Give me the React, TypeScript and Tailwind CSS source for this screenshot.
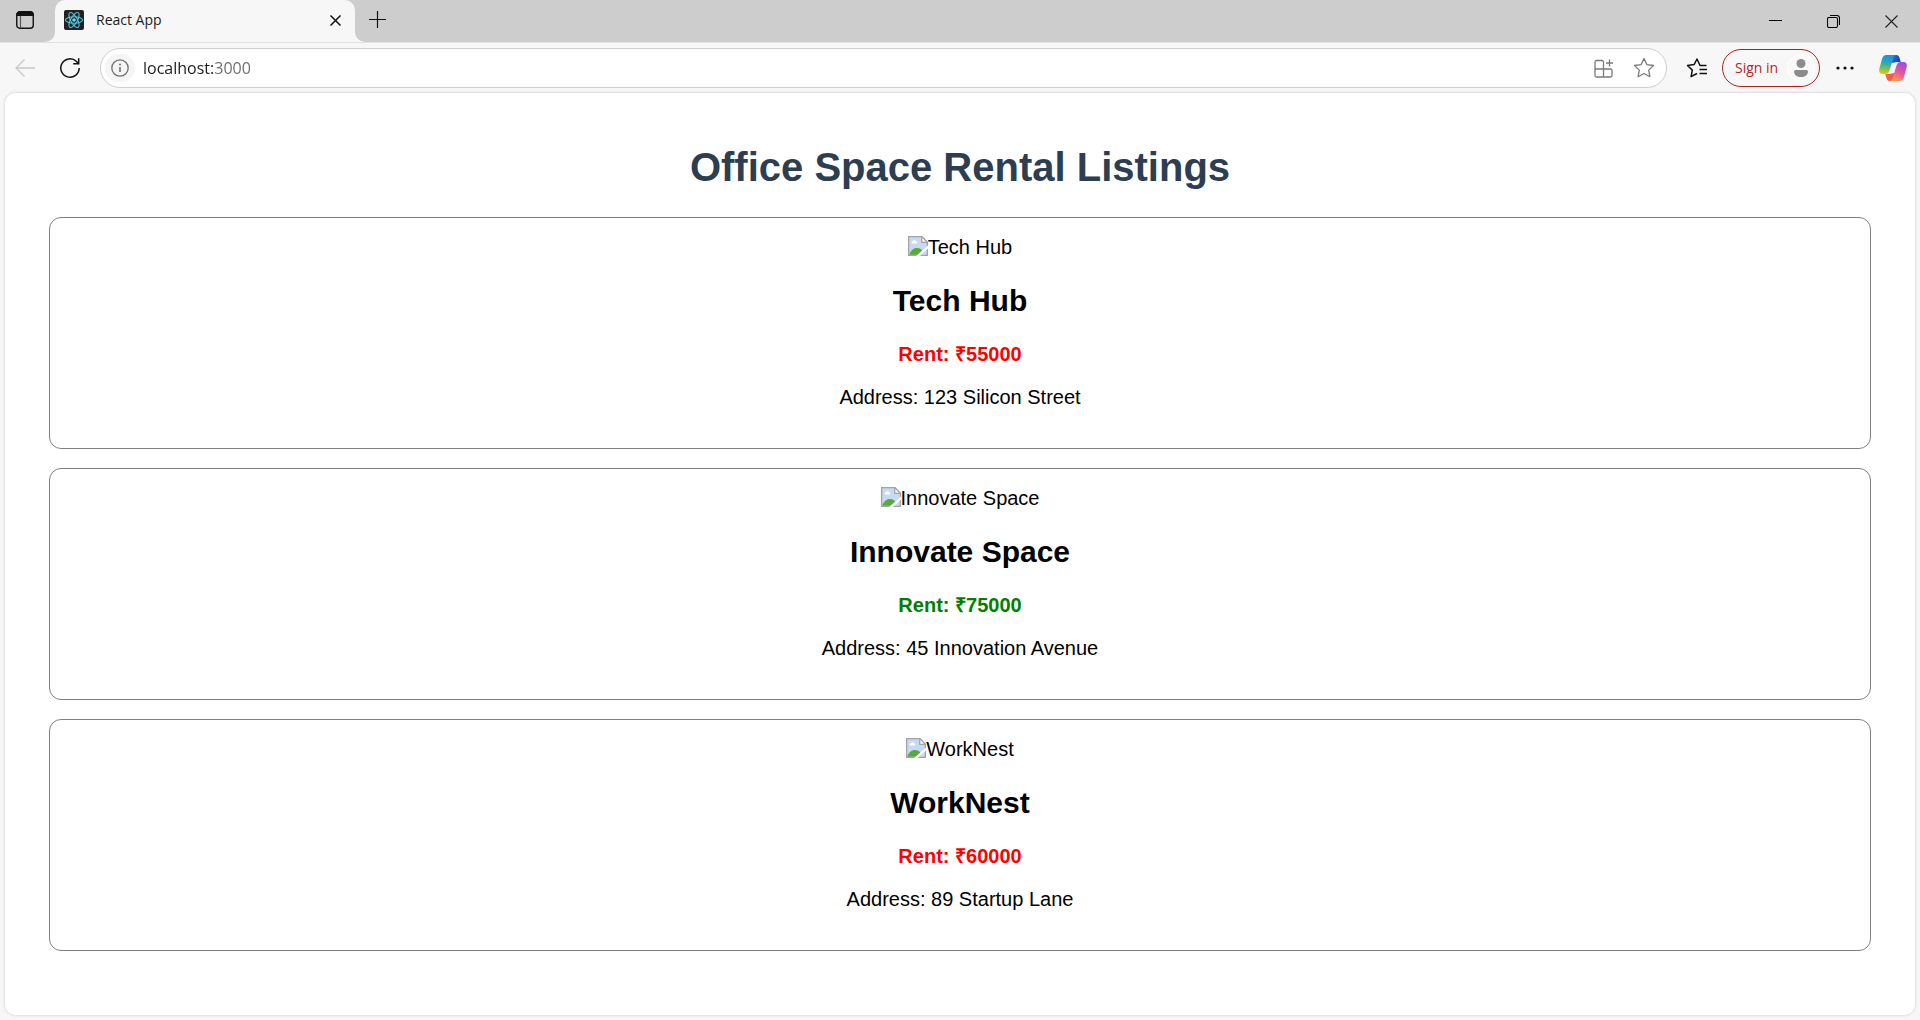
import React from "react";

type Listing = {
  name: string;
  rent: number;
  address: string;
};

const listings: Listing[] = [
  { name: "Tech Hub", rent: 55000, address: "123 Silicon Street" },
  { name: "Innovate Space", rent: 75000, address: "45 Innovation Avenue" },
  { name: "WorkNest", rent: 60000, address: "89 Startup Lane" },
];

function WorkspacesIcon() {
  return (
    <svg width="18" height="18" viewBox="0 0 18 18" fill="none" stroke="#111">
      <rect x="0.75" y="0.75" width="16.5" height="16.5" rx="3" strokeWidth="1.4" />
      <path d="M1 4.5V3a2 2 0 0 1 2-2h12a2 2 0 0 1 2 2v1.500z" fill="#111" strokeWidth="1" />
      <path d="M4.500 5v12" stroke="#555" strokeWidth="1.200" />
    </svg>
  );
}

function ReactLogo() {
  return (
    <svg width="20" height="20" viewBox="0 0 20 20" fill="none">
      <rect width="20" height="20" rx="2" fill="#222" />
      <g stroke="#58c4dc" strokeWidth="1.100">
        <ellipse cx="10" cy="10" rx="8.500" ry="3.300" />
        <ellipse cx="10" cy="10" rx="8.500" ry="3.300" transform="rotate(60 10 10)" />
        <ellipse cx="10" cy="10" rx="8.500" ry="3.300" transform="rotate(120 10 10)" />
      </g>
      <circle cx="10" cy="10" r="1.800" fill="#61dafb" />
    </svg>
  );
}

function CopilotLogo() {
  return (
    <svg width="28" height="26" viewBox="0 0 28 26">
      <defs>
        <linearGradient id="cpLeft" x1="0.400" y1="0" x2="0.300" y2="1">
          <stop offset="0" stopColor="#1c8fe8" />
          <stop offset="0.400" stopColor="#2aa7b8" />
          <stop offset="0.700" stopColor="#7cc04b" />
          <stop offset="1" stopColor="#f3c613" />
        </linearGradient>
        <linearGradient id="cpRight" x1="0.700" y1="0" x2="0.300" y2="1">
          <stop offset="0" stopColor="#9b4fe8" />
          <stop offset="0.500" stopColor="#e4559f" />
          <stop offset="1" stopColor="#ff9a4a" />
        </linearGradient>
        <linearGradient id="cpTop" x1="0" y1="0" x2="1" y2="0.600">
          <stop offset="0" stopColor="#1a7fe0" />
          <stop offset="1" stopColor="#1f3fc4" />
        </linearGradient>
        <linearGradient id="cpBottom" x1="0" y1="0" x2="1" y2="0">
          <stop offset="0" stopColor="#f26b2c" />
          <stop offset="1" stopColor="#f0506a" />
        </linearGradient>
      </defs>
      <path d="M12 0h5.500c2 0 2.600 1.400 3.200 3.500l1 3.500h-3.500c-2.500 0-3.500.8-5.200 1z" fill="url(#cpTop)" />
      <path d="M16 26h-5.500c-2 0-2.600-1.400-3.200-3.500l-1-3.500h3.500c2.500 0 3.500-.8 5.200-1z" fill="url(#cpBottom)" />
      <path d="M7.500 0H17c-1.600.6-2.300 2-2.900 4l-3.600 11.500C9.700 18 8.500 19 6.500 19h-3C.8 19-.4 17 .3 14L3 4C3.800 1.300 5.200 0 7.500 0z" fill="url(#cpLeft)" />
      <path d="M20.500 26H11c1.600-.6 2.300-2 2.900-4l3.600-11.500C18.300 8 19.500 7 21.500 7h3c2.700 0 3.900 2 3.200 5L25 22c-.8 2.700-2.200 4-4.500 4z" fill="url(#cpRight)" />
    </svg>
  );
}

function BrokenImageIcon() {
  return (
    <svg width="20" height="20" viewBox="0 0 16 16" className="shrink-0">
      <path d="M0.500 0.500h10.500l4.500 4.500v10.500h-15z" fill="#c6d9f5" stroke="#a3a3a3" />
      <path d="M11 0.500v4.500h4.500z" fill="#fff" stroke="#a3a3a3" />
      <path d="M3 5.500a1 1 0 0 1 1-1.500 1.700 1.700 0 0 1 3 .5 1 1 0 0 1 0 1.500H3.500z" fill="#fff" />
      <path d="M1 15c1-3.500 3.500-5.500 6-5.500s4 1 5 3L9 15z" fill="#57aa3c" />
      <path d="M16 7.500v2.500L9.500 16H6.500z" fill="#fff" />
    </svg>
  );
}

function TabStrip() {
  return (
    <header className="flex h-[42px] items-stretch bg-[#cdcdcd] text-[#1b1b1b]">
      <div className="flex w-[55px] rounded-br-[10px] bg-[#cdcdcd]">
        <button aria-label="Tab actions menu" className="flex w-[50px] items-center justify-center pb-[2px]">
          <WorkspacesIcon />
        </button>
      </div>
      <div className="-mx-[10px] flex bg-[#f7f7f7]">
        <div className="w-[10px] rounded-br-[10px] bg-[#cdcdcd]" />
        <div className="w-[300px] bg-[#cdcdcd]">
          <div className="flex h-full items-center rounded-t-[10px] bg-[#f7f7f7] pr-[10px] pb-[2px] pl-[9px]">
            <ReactLogo />
            <span className="ml-3 flex-1 text-sm">React App</span>
            <button aria-label="Close tab" className="flex h-5 w-5 items-center justify-center">
              <svg width="11" height="11" viewBox="0 0 11 11" stroke="#111" strokeWidth="1.500">
                <path d="M0.500 0.500l10 10M10.500 0.500l-10 10" />
              </svg>
            </button>
          </div>
        </div>
        <div className="w-[10px] rounded-bl-[10px] bg-[#cdcdcd]" />
      </div>
      <button aria-label="New tab" className="flex w-11 items-center justify-center pb-[3px]">
        <svg width="17" height="17" viewBox="0 0 17 17" stroke="#111" strokeWidth="1.200">
          <path d="M8.500 0v17M0 8.500h17" />
        </svg>
      </button>
      <div className="flex-1" />
      <button aria-label="Minimize" className="flex w-[58px] items-center justify-center">
        <svg width="13" height="13" viewBox="0 0 13 13" stroke="#000" strokeWidth="1">
          <path d="M0 5.500h13" />
        </svg>
      </button>
      <button aria-label="Restore" className="flex w-[58px] items-center justify-center">
        <svg width="13" height="13" viewBox="0 0 13 13" fill="none" stroke="#000" strokeWidth="1.100">
          <rect x="0.500" y="2.500" width="10" height="10" rx="1.500" />
          <path d="M3 0.500h7a2.500 2.500 0 0 1 2.500 2.500v7" />
        </svg>
      </button>
      <button aria-label="Close window" className="flex w-[58px] items-center justify-center">
        <svg width="13" height="13" viewBox="0 0 13 13" stroke="#222" strokeWidth="1.100">
          <path d="M0.500 0.500l12 12M12.500 0.500l-12 12" />
        </svg>
      </button>
    </header>
  );
}

function Toolbar() {
  return (
    <nav className="flex h-[51px] items-center border-t border-[#e2e2e2] bg-[#f7f7f7] pr-[13px] pl-[15px]">
      <button aria-label="Back" disabled>
        <svg width="20" height="18" viewBox="0 0 20 18" fill="none" stroke="#c8c8c8" strokeWidth="1.300">
          <path d="M20 9H1M9.500 0.500L1 9l8.500 8.500" />
        </svg>
      </button>
      <button aria-label="Refresh" className="ml-[25px]">
        <svg width="20" height="20" viewBox="0 0 20 20" fill="none" stroke="#111" strokeWidth="1.500">
          <path d="M19.200 10A9.200 9.200 0 1 1 16.500 3.500L18.700 5.700M18.700 0.300V5.700H13.200" />
        </svg>
      </button>
      <div className="ml-5 flex h-10 flex-1 items-center rounded-full border border-[#cfcfcf] bg-white pr-[11px] pl-1">
        <button
          aria-label="View site information"
          className="flex h-7 w-[30px] items-center justify-center rounded-full bg-[#f5f5f5]"
        >
          <svg width="18" height="18" viewBox="0 0 18 18" fill="none" stroke="#707070" strokeWidth="1.300">
            <circle cx="9" cy="9" r="8.200" />
            <path d="M9 8v5" strokeWidth="1.600" />
            <circle cx="9" cy="5.500" r="1" fill="#707070" stroke="none" />
          </svg>
        </button>
        <input
          aria-label="Address and search bar"
          defaultValue="localhost:3000"
          className="ml-2 min-w-0 flex-1 bg-[linear-gradient(to_right,#1b1b1b_70px,#6b6b6b_70px)] bg-clip-text text-base text-transparent outline-none"
        />
        <button aria-label="App available">
          <svg width="19" height="19" viewBox="0 0 19 19" fill="none" stroke="#7a7a7a" strokeWidth="1.300">
            <path d="M9.500 10V3a1.500 1.500 0 0 0-1.500-1.500H2.500A1.500 1.500 0 0 0 1 3v13.500A1.500 1.500 0 0 0 2.500 18h14a1.500 1.500 0 0 0 1.500-1.500V11.500a1.500 1.500 0 0 0-1.500-1.500H1M9.500 10v8M15.500 0.500v7M12 4h7" />
          </svg>
        </button>
        <button aria-label="Add this page to favorites" className="ml-5">
          <svg width="22" height="22" viewBox="0 0 22 22" fill="none" stroke="#7a7a7a" strokeWidth="1.300" strokeLinejoin="round">
            <path d="M11 1.500l2.900 6.100 6.600.9-4.800 4.600 1.200 6.600L11 16.500l-5.900 3.200 1.200-6.600L1.500 8.500l6.600-.9z" />
          </svg>
        </button>
      </div>
      <button aria-label="Favorites" className="ml-[19px]">
        <svg width="22" height="22" viewBox="0 0 22 22" fill="none" stroke="#111" strokeWidth="1.500" strokeLinejoin="round">
          <path d="M20.500 8.500H14L11 2 8.100 7.600 1.500 8.500l4.800 4.600-1.200 6.600 5.900-3.200M13.500 12.500h7.500M13.500 16.500h7.500" />
        </svg>
      </button>
      <button className="ml-[14px] flex h-[38px] w-[98px] items-center rounded-full border border-[#b01e1e] pl-3 text-sm text-[#b5262b]">
        Sign in
        <svg className="ml-auto mr-1" width="28" height="28" viewBox="0 0 28 28">
          <circle cx="14" cy="14" r="13.500" fill="#f9f9f9" stroke="#fff" />
          <circle cx="14" cy="9.500" r="4.500" fill="#8c8c8c" />
          <path d="M7 17.500a1.500 1.500 0 0 1 1.500-1.500h11a1.500 1.500 0 0 1 1.500 1.500c0 3.500-3 5.500-7 5.500s-7-2-7-5.500z" fill="#8c8c8c" />
        </svg>
      </button>
      <button aria-label="Settings and more" className="ml-4">
        <svg width="18" height="4" viewBox="0 0 18 4" fill="#111">
          <circle cx="2" cy="2" r="1.600" />
          <circle cx="9" cy="2" r="1.600" />
          <circle cx="16" cy="2" r="1.600" />
        </svg>
      </button>
      <button aria-label="Copilot" className="ml-[25px]">
        <CopilotLogo />
      </button>
    </nav>
  );
}

function ListingCard({ name, rent, address }: Listing) {
  return (
    <article className="flex flex-col items-center rounded-xl border border-[#808080] pt-[18px] pb-[19px] text-xl/[23px] text-black">
      <div className="flex h-[23px]">
        <BrokenImageIcon />
        <span>{name}</span>
      </div>
      <h2 className="mt-[25px] text-[30px]/[34px] font-bold">{name}</h2>
      <p className={rent <= 60000 ? "mt-[25px] font-bold text-[#ff0000]" : "mt-[25px] font-bold text-[#008000]"}>
        Rent: ₹{rent}
      </p>
      <p className="my-5">Address: {address}</p>
    </article>
  );
}

export default function App() {
  return (
    <div className="flex min-h-screen flex-col bg-[#f7f7f7] font-['Open_Sans',sans-serif]">
      <TabStrip />
      <Toolbar />
      <main className="mx-[5px] mb-[5px] flex-1 rounded-[10px] bg-white px-11 pt-[51px] pb-10 font-['Liberation_Sans',sans-serif] shadow-[0_0_3px_rgba(0,0,0,0.2)]">
        <h1 className="text-center text-[40px]/[46px] font-bold text-[#2c3e50]">Office Space Rental Listings</h1>
        <section className="mt-[27px] flex flex-col gap-[19px]">
          {listings.map((listing) => (
            <ListingCard key={listing.name} {...listing} />
          ))}
        </section>
      </main>
    </div>
  );
}
